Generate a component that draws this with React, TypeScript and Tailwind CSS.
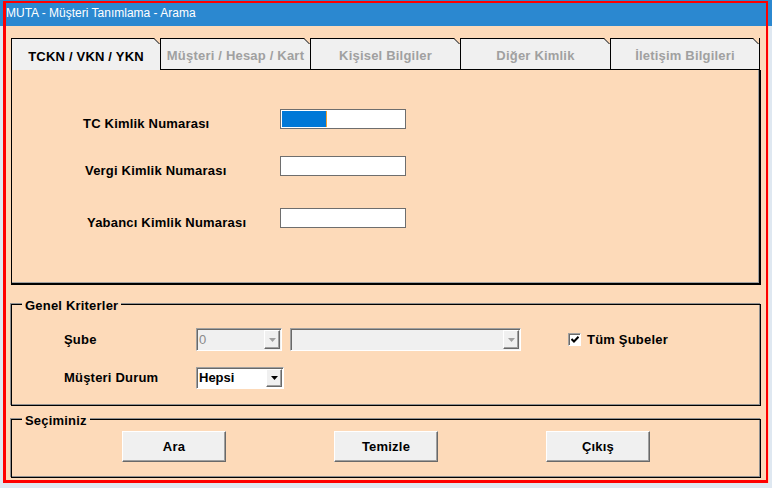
const tabs = [
  'TCKN / VKN / YKN',
  'Müşteri / Hesap / Kart',
  'Kişisel Bilgiler',
  'Diğer Kimlik',
  'İletişim Bilgileri',
];

function TabNotch() {
  return (
    <svg className="absolute -top-px right-0" width="6" height="6" viewBox="0 0 6 6">
      <polygon points="0,0 6,0 6,6" fill="#fddab9" />
      <line x1="0" y1="0.5" x2="5.5" y2="6" stroke="#000" strokeWidth="1" />
    </svg>
  );
}

function Arrow({ color }: { color: string }) {
  return (
    <svg width="7" height="4" viewBox="0 0 7 4">
      <polygon points="0,0 7,0 3.5,4" fill={color} />
    </svg>
  );
}

function Combo({
  className,
  value,
  disabled,
}: {
  className: string;
  value?: string;
  disabled?: boolean;
}) {
  return (
    <div
      className={
        'flex items-stretch border border-t-[#a0a0a0] border-l-[#a0a0a0] border-r-white border-b-white shadow-[inset_1px_1px_0_#696969] p-[1px] pl-[2px] ' +
        (disabled ? 'bg-[#f0f0f0] ' : 'bg-white ') +
        className
      }
    >
      <div
        className={
          'flex flex-1 items-center ' +
          (disabled ? 'text-[#8a8a8a] font-normal' : 'text-black font-bold')
        }
      >
        {value}
      </div>
      <div className="flex w-[16px] items-center justify-center bg-[#f0f0f0] border border-t-white border-l-white border-r-[#696969] border-b-[#696969] shadow-[inset_-1px_-1px_0_#a0a0a0]">
        <Arrow color={disabled ? '#a0a0a0' : '#000'} />
      </div>
    </div>
  );
}

function TextBox({ selected }: { selected?: boolean }) {
  return (
    <div className="h-[20px] w-[126px] border border-[#6e6e6e] bg-white p-[1px]">
      {selected && (
        <div className="flex h-full">
          <div className="h-full w-[44px] bg-[#0078d7]" />
          <div className="h-full w-px bg-[#f0a030]" />
        </div>
      )}
    </div>
  );
}

function WinButton({ label }: { label: string }) {
  return (
    <button className="h-[31px] w-[104px] bg-[#f0f0f0] border border-t-white border-l-white border-r-[#696969] border-b-[#696969] shadow-[inset_-1px_-1px_0_#a0a0a0] text-[13px] font-bold tracking-[0.2px] text-black">
      {label}
    </button>
  );
}

function Group({
  title,
  className,
  children,
}: {
  title: string;
  className: string;
  children: React.ReactNode;
}) {
  return (
    <div
      className={
        'relative border border-black shadow-[-1px_-1px_0_#909090,inset_-1px_-1px_0_#909090] ' +
        className
      }
    >
      <span className="absolute -top-[6px] left-[10px] bg-[#fddab9] px-[3px] text-[13px] font-bold leading-[14px] tracking-[0.2px] text-black">
        {title}
      </span>
      {children}
    </div>
  );
}

export default function App() {
  return (
    <div className="relative flex h-[488px] w-[772px] flex-col overflow-hidden bg-[#dfe8f1] font-['Liberation_Sans',Arial,sans-serif] text-[13px] text-black">
      <div className="flex h-[26px] shrink-0 items-center bg-[#2b88d0] pl-[6px] text-[12px] text-white">
        MUTA - Müşteri Tanımlama - Arama
      </div>

      <div className="mx-[3px] flex h-[457px] flex-col bg-[#fddab9] pl-[8px] pr-[8px] pt-[12px]">
        {/* tab strip */}
        <div className="flex h-[32px]">
          {tabs.map((t, i) => (
            <div
              key={t}
              className={
                'relative flex items-center justify-center border-t border-l border-black pt-[4px] font-bold tracking-[0.2px] ' +
                (i === 0 ? 'w-[149px] bg-[#f0f0f0] text-black ' : 'w-[150px] border-b bg-[#f0f0f0] text-[#a0a0a0] ') +
                (i === tabs.length - 1 ? 'border-r' : '')
              }
            >
              <span>{t}</span>
              <TabNotch />
            </div>
          ))}
        </div>

        {/* tab page */}
        <div className="flex h-[215px] w-[750px] flex-col border-l border-r-2 border-b-2 border-black shadow-[inset_-1px_-1px_0_#a0a0a0] pt-[39px] font-bold tracking-[0.2px]">
          <div className="flex h-[20px] items-start">
            <div className="mt-[8px] w-[268px] pl-[71px] leading-[14px]">TC Kimlik Numarası</div>
            <TextBox selected />
          </div>
          <div className="mt-[27px] flex h-[20px] items-start">
            <div className="mt-[8px] w-[268px] pl-[73px] leading-[14px]">Vergi Kimlik Numarası</div>
            <TextBox />
          </div>
          <div className="mt-[32px] flex h-[20px] items-start">
            <div className="mt-[8px] w-[268px] pl-[75px] leading-[14px]">Yabancı Kimlik Numarası</div>
            <TextBox />
          </div>
        </div>

        <Group title="Genel Kriterler" className="mt-[19px] h-[102px] w-[750px] pt-[23px]">
          <div className="flex h-[23px] items-center">
            <div className="w-[184px] pl-[52px] font-bold tracking-[0.2px]">Şube</div>
            <Combo className="h-[23px] w-[86px]" value="0" disabled />
            <Combo className="ml-[8px] h-[23px] w-[231px]" disabled />
            <div className="ml-[47px] flex items-center gap-[6px]">
              <div className="flex h-[13px] w-[13px] items-center justify-center border border-t-[#a0a0a0] border-l-[#a0a0a0] border-r-white border-b-white bg-white shadow-[inset_1px_1px_0_#696969]">
                <svg width="8" height="7" viewBox="0 0 8 7">
                  <polyline points="0.5,3 3,5.5 7.5,0.8" fill="none" stroke="#000" strokeWidth="2" />
                </svg>
              </div>
              <span className="font-bold tracking-[0.2px]">Tüm Şubeler</span>
            </div>
          </div>
          <div className="mt-[16px] flex h-[22px] items-center">
            <div className="w-[184px] pl-[52px] font-bold tracking-[0.2px]">Müşteri Durum</div>
            <Combo className="h-[22px] w-[88px]" value="Hepsi" />
          </div>
        </Group>

        <Group title="Seçiminiz" className="mt-[13px] h-[59px] w-[750px] pt-[11px]">
          <div className="flex gap-[108px] pl-[110px]">
            <WinButton label="Ara" />
            <WinButton label="Temizle" />
            <WinButton label="Çıkış" />
          </div>
        </Group>
      </div>

      {/* red highlight frame drawn over the window */}
      <div className="pointer-events-none absolute left-[3px] top-[1px] h-[482px] w-[765px] border-2 border-l-[3px] border-b-[3px] border-[#ff0000]" />
    </div>
  );
}
